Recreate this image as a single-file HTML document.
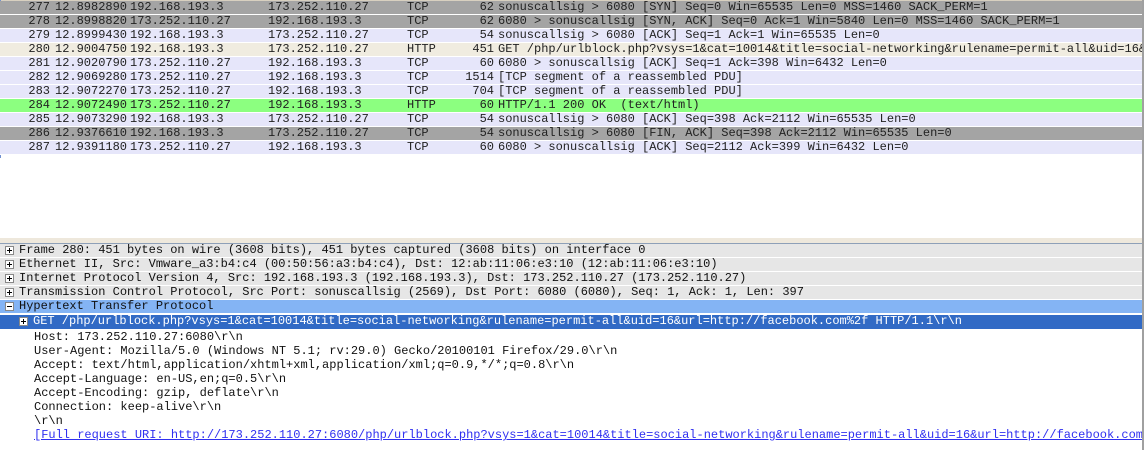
<!DOCTYPE html>
<html><head><style>
body{margin:0;width:1144px;height:450px;background:#fff;overflow:hidden;font-family:"Liberation Mono",monospace;font-size:12px;position:relative}
.r{position:absolute;left:0;width:1142px;height:13px;border-bottom:1px solid #fff;white-space:pre;line-height:13px;color:#222}
.r span{position:absolute;top:0}
.g{background:#a4a4a4}.l{background:#e6e6fa}.b{background:#f0ece0}.gr{background:#8cff80}
.d{position:absolute;left:0;width:1142px;height:13px;border-bottom:1px solid #fff;white-space:pre;line-height:13px;color:#111;overflow:hidden}
.dg{background:#e6e6e6}
.pm{position:absolute;width:7px;height:7px;border:1px solid #888;background:#fff;top:2px}
.pm:before{content:"";position:absolute;left:1px;top:3px;width:5px;height:1px;background:#000}
.pl:after{content:"";position:absolute;left:3px;top:1px;width:1px;height:5px;background:#000}
</style></head><body>
<div style="position:absolute;left:0;top:0;width:1142px;height:1px;background:#d8d0c0"></div>
<div style="position:absolute;left:0;top:0;width:1px;height:158px;background:#7090d0"></div>
<div id="list"></div>
<div style="position:absolute;left:0;top:238px;width:1142px;height:5px;background:#eee8dc"></div>
<div style="position:absolute;left:0;top:243px;width:1142px;height:1px;background:#8ea0b8"></div>
<div style="position:absolute;left:1142px;top:0;width:2px;height:450px;background:#a0a0a0"></div>

<div class="d dg" style="top:244px"><div class="pm pl" style="left:5px"></div><span style="position:absolute;left:19px">Frame 280: 451 bytes on wire (3608 bits), 451 bytes captured (3608 bits) on interface 0</span></div>
<div class="d dg" style="top:258px"><div class="pm pl" style="left:5px"></div><span style="position:absolute;left:19px">Ethernet II, Src: Vmware_a3:b4:c4 (00:50:56:a3:b4:c4), Dst: 12:ab:11:06:e3:10 (12:ab:11:06:e3:10)</span></div>
<div class="d dg" style="top:272px"><div class="pm pl" style="left:5px"></div><span style="position:absolute;left:19px">Internet Protocol Version 4, Src: 192.168.193.3 (192.168.193.3), Dst: 173.252.110.27 (173.252.110.27)</span></div>
<div class="d dg" style="top:286px"><div class="pm pl" style="left:5px"></div><span style="position:absolute;left:19px">Transmission Control Protocol, Src Port: sonuscallsig (2569), Dst Port: 6080 (6080), Seq: 1, Ack: 1, Len: 397</span></div>
<div class="d" style="top:300px;background:#84b4f4"><div class="pm" style="left:5px"></div><span style="position:absolute;left:19px">Hypertext Transfer Protocol</span></div>
<div class="d" style="top:315px;height:14px;background:#316ac5;color:#fff"><div class="pm pl" style="left:19px"></div><span style="position:absolute;left:33px">GET /php/urlblock.php?vsys=1&amp;cat=10014&amp;title=social-networking&amp;rulename=permit-all&amp;uid=16&amp;url=http://facebook.com%2f HTTP/1.1\r\n</span></div>
<div class="d" style="top:331px"><span style="position:absolute;left:34px">Host: 173.252.110.27:6080\r\n</span></div>
<div class="d" style="top:345px"><span style="position:absolute;left:34px">User-Agent: Mozilla/5.0 (Windows NT 5.1; rv:29.0) Gecko/20100101 Firefox/29.0\r\n</span></div>
<div class="d" style="top:359px"><span style="position:absolute;left:34px">Accept: text/html,application/xhtml+xml,application/xml;q=0.9,*/*;q=0.8\r\n</span></div>
<div class="d" style="top:373px"><span style="position:absolute;left:34px">Accept-Language: en-US,en;q=0.5\r\n</span></div>
<div class="d" style="top:387px"><span style="position:absolute;left:34px">Accept-Encoding: gzip, deflate\r\n</span></div>
<div class="d" style="top:401px"><span style="position:absolute;left:34px">Connection: keep-alive\r\n</span></div>
<div class="d" style="top:415px"><span style="position:absolute;left:34px">\r\n</span></div>
<div class="d" style="top:429px"><span style="position:absolute;left:34px;color:#3030f0;text-decoration:underline">[Full request URI: http://173.252.110.27:6080/php/urlblock.php?vsys=1&amp;cat=10014&amp;title=social-networking&amp;rulename=permit-all&amp;uid=16&amp;url=http://facebook.com%2f]</span></div>

<script>
var rows=[
["g","277","12.8982890","192.168.193.3","173.252.110.27","TCP","62","sonuscallsig > 6080 [SYN] Seq=0 Win=65535 Len=0 MSS=1460 SACK_PERM=1"],
["g","278","12.8998820","173.252.110.27","192.168.193.3","TCP","62","6080 > sonuscallsig [SYN, ACK] Seq=0 Ack=1 Win=5840 Len=0 MSS=1460 SACK_PERM=1"],
["l","279","12.8999430","192.168.193.3","173.252.110.27","TCP","54","sonuscallsig > 6080 [ACK] Seq=1 Ack=1 Win=65535 Len=0"],
["b","280","12.9004750","192.168.193.3","173.252.110.27","HTTP","451","GET /php/urlblock.php?vsys=1&cat=10014&title=social-networking&rulename=permit-all&uid=16&url=http://facebook.com%2f HTTP/1.1"],
["l","281","12.9020790","173.252.110.27","192.168.193.3","TCP","60","6080 > sonuscallsig [ACK] Seq=1 Ack=398 Win=6432 Len=0"],
["l","282","12.9069280","173.252.110.27","192.168.193.3","TCP","1514","[TCP segment of a reassembled PDU]"],
["l","283","12.9072270","173.252.110.27","192.168.193.3","TCP","704","[TCP segment of a reassembled PDU]"],
["gr","284","12.9072490","173.252.110.27","192.168.193.3","HTTP","60","HTTP/1.1 200 OK  (text/html)"],
["l","285","12.9073290","192.168.193.3","173.252.110.27","TCP","54","sonuscallsig > 6080 [ACK] Seq=398 Ack=2112 Win=65535 Len=0"],
["g","286","12.9376610","192.168.193.3","173.252.110.27","TCP","54","sonuscallsig > 6080 [FIN, ACK] Seq=398 Ack=2112 Win=65535 Len=0"],
["l","287","12.9391180","173.252.110.27","192.168.193.3","TCP","60","6080 > sonuscallsig [ACK] Seq=2112 Ack=399 Win=6432 Len=0"]];
var h="";
function esc(s){return s.replace(/&/g,"&amp;").replace(/</g,"&lt;").replace(/>/g,"&gt;");}
rows.forEach(function(r,i){
h+='<div class="r '+r[0]+'" style="top:'+(1+14*i)+'px;overflow:hidden">'+
'<span style="right:1092px">'+r[1]+'</span>'+
'<span style="left:55px">'+r[2]+'</span>'+
'<span style="left:130px">'+r[3]+'</span>'+
'<span style="left:268px">'+r[4]+'</span>'+
'<span style="left:407px">'+r[5]+'</span>'+
'<span style="right:648px">'+r[6]+'</span>'+
'<span style="left:498px">'+esc(r[7])+'</span></div>';});
document.getElementById("list").innerHTML=h;
</script>
</body></html>
